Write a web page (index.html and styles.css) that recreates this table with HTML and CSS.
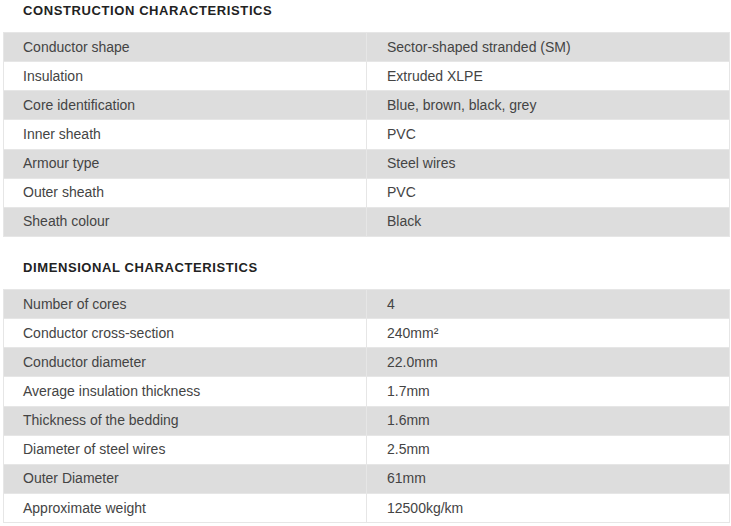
FILE: index.html
```html
<!DOCTYPE html>
<html>
<head>
<meta charset="utf-8">
<link rel="stylesheet" href="styles.css">
</head>
<body>
<div class="page">
  <h3 class="section-title">CONSTRUCTION CHARACTERISTICS</h3>
  <table class="spec">
    <tr><td>Conductor shape</td><td>Sector-shaped stranded (SM)</td></tr>
    <tr><td>Insulation</td><td>Extruded XLPE</td></tr>
    <tr><td>Core identification</td><td>Blue, brown, black, grey</td></tr>
    <tr><td>Inner sheath</td><td>PVC</td></tr>
    <tr><td>Armour type</td><td>Steel wires</td></tr>
    <tr><td>Outer sheath</td><td>PVC</td></tr>
    <tr><td>Sheath colour</td><td>Black</td></tr>
  </table>
  <h3 class="section-title second">DIMENSIONAL CHARACTERISTICS</h3>
  <table class="spec">
    <tr><td>Number of cores</td><td>4</td></tr>
    <tr><td>Conductor cross-section</td><td>240mm²</td></tr>
    <tr><td>Conductor diameter</td><td>22.0mm</td></tr>
    <tr><td>Average insulation thickness</td><td>1.7mm</td></tr>
    <tr><td>Thickness of the bedding</td><td>1.6mm</td></tr>
    <tr><td>Diameter of steel wires</td><td>2.5mm</td></tr>
    <tr><td>Outer Diameter</td><td>61mm</td></tr>
    <tr><td>Approximate weight</td><td>12500kg/km</td></tr>
  </table>
</div>
</body>
</html>
```
FILE: styles.css
```css
html, body {
  margin: 0;
  padding: 0;
  background: #ffffff;
}
.page {
  padding: 0 2px 0 3px;
  font-family: "Liberation Sans", Arial, sans-serif;
  color: #444444;
}
.section-title {
  margin: 0 0 12px 0;
  padding-left: 20px;
  padding-top: 1px;
  height: 19px;
  font-size: 13px;
  line-height: 20px;
  font-weight: bold;
  color: #222222;
  letter-spacing: 0.6px;
}
.section-title.second {
  margin-top: 20px;
}
.spec {
  width: 727px;
  border-collapse: collapse;
  border: 1px solid #e6e6e6;
  font-size: 14px;
}
.spec td {
  width: 50%;
  height: 29.15px;
  padding: 0 19px 0 20px;
  line-height: 17px;
  border-top: 1px solid #e6e6e6;
  border-left: 1px solid #e6e6e6;
  box-sizing: border-box;
}
.spec td:first-child {
  padding-left: 19px;
}
.spec tr:nth-child(odd) td {
  background: #dddddd;
}
```
